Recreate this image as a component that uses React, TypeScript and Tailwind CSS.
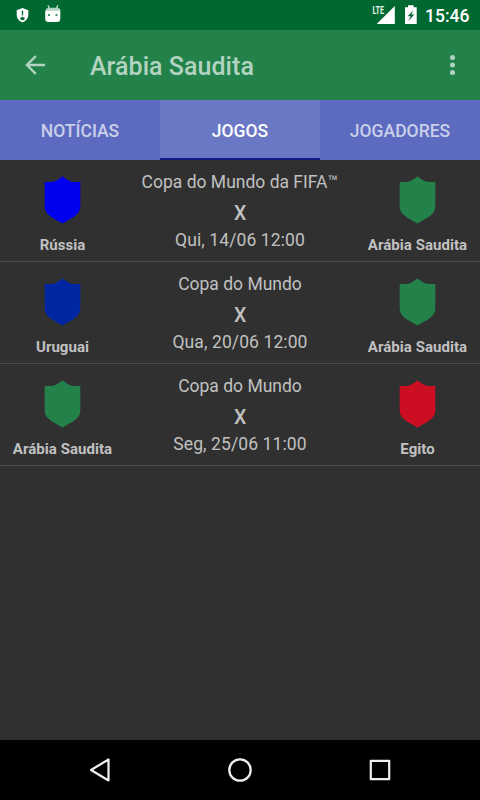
const matches = [
  { home: "Rússia", homeColor: "#0000ee", away: "Arábia Saudita", awayColor: "#22824a", cup: "Copa do Mundo da FIFA™", date: "Qui, 14/06 12:00" },
  { home: "Uruguai", homeColor: "#0026a3", away: "Arábia Saudita", awayColor: "#22824a", cup: "Copa do Mundo", date: "Qua, 20/06 12:00" },
  { home: "Arábia Saudita", homeColor: "#22824a", away: "Egito", awayColor: "#cb0e21", cup: "Copa do Mundo", date: "Seg, 25/06 11:00" },
];

function Shield({ color }: { color: string }) {
  return (
    <svg width="37" height="48" viewBox="0 0 37 48" fill={color}>
      <path d="M18.5 .2C14.4 3.6 11.5 5.9 7 5.9H.7V30.5C.7 38.5 7.5 41 18.5 47.6C29.5 41 36.3 38.5 36.3 30.5V5.9H30C25.5 5.9 22.6 3.6 18.5 .2Z" />
    </svg>
  );
}

function Team({ name, color }: { name: string; color: string }) {
  return (
    <div className="flex w-[125px] flex-col items-center pt-4">
      <Shield color={color} />
      <span className="mt-[11px] whitespace-nowrap text-[15px] leading-[20px] font-bold tracking-[0.05px]">{name}</span>
    </div>
  );
}

function StatusBar() {
  return (
    <div className="flex h-[30px] items-center bg-[#006830] text-white">
      <svg className="ml-4" width="13" height="30" viewBox="0 0 13 30">
        <path d="M6.5 8L12.3 10.2V14.8C12.3 18.4 9.8 21.3 6.5 22.4C3.2 21.3.7 18.4.7 14.8V10.2Z" fill="white" />
        <path d="M6.5 10.8V14.7M6.5 15.4V16.3" stroke="#006830" strokeWidth="1.4" />
        <ellipse cx="6.5" cy="18.6" rx="2.3" ry="1.7" fill="#006830" />
      </svg>
      <svg className="ml-4" width="16" height="30" viewBox="0 0 16 30">
        <path d="M3 5.2L4.5 9M12.8 5.2L11.3 9" stroke="#d5e8dc" strokeWidth="1.2" />
        <path d="M.5 11C.5 8.8 2 7.8 4.5 7.8H11.5C14 7.8 15.5 8.8 15.5 11Z" fill="#b3d2c1" />
        <path d="M.2 10.8H15.3V18.5Q15.3 22 12 22H3.5Q.2 22 .2 18.5Z" fill="white" />
        <path d="M3 14H5V16H3ZM10.5 14H12.5V16H10.5Z" fill="#43966a" />
      </svg>
      <div className="ml-auto flex h-full items-start">
        <svg width="24" height="30" viewBox="0 0 24 30">
          <text x="0.5" y="14" fontFamily="Roboto, sans-serif" fontSize="11" fontWeight="700" fill="#eaf4ee" textLength="11.5" lengthAdjust="spacingAndGlyphs">LTE</text>
          <path d="M4.7 24L22.8 6V24Z" fill="white" />
        </svg>
        <svg className="ml-[8px]" width="14" height="30" viewBox="0 0 14 30">
          <path d="M1 7.3H4V5.3H9.6V7.3H12.7V24H1Z" fill="white" />
          <path d="M9.3 10.3L3.7 16.2H6.7L4.2 21.2L10.3 14.4H7.4Z" fill="#006830" />
        </svg>
      </div>
      <span className="mr-[10px] ml-[7px] w-[45px] whitespace-nowrap pt-[2px] text-[17.5px] leading-[20px] font-medium">15:46</span>
    </div>
  );
}

export default function App() {
  return (
    <div className="flex h-[800px] w-[480px] flex-col overflow-hidden bg-[#303030] font-[Roboto,sans-serif]">
      <StatusBar />
      <header className="flex h-[70px] items-center bg-[#22824a] text-[#b2d3c0]">
        <svg className="ml-[25px]" width="21" height="20" viewBox="0 0 21 20" fill="none" stroke="currentColor" strokeWidth="2.3">
          <path d="M20 10H2M10.8 1.1L1.9 10L10.8 18.9" />
        </svg>
        <h1 className="mt-[3px] ml-11 text-[25px] leading-[30px] font-medium tracking-[0.04px]">Arábia Saudita</h1>
        <svg className="mr-6 ml-auto" width="6" height="22" viewBox="0 0 6 22" fill="currentColor">
          <circle cx="2.5" cy="3.5" r="2.5" />
          <circle cx="2.5" cy="11" r="2.5" />
          <circle cx="2.5" cy="18.5" r="2.5" />
        </svg>
      </header>
      <nav className="grid h-[60px] grid-cols-3 bg-[#5c6bc0] text-center text-[17.5px] leading-[62px] font-medium text-[#cacfea]">
        <span>NOTÍCIAS</span>
        <span className="h-[60px] border-b-2 border-[#101e82] bg-[#6977c4] text-white">JOGOS</span>
        <span>JOGADORES</span>
      </nav>
      <main className="flex-1 text-[#c1c1c1]">
        {matches.map((match) => (
          <section key={match.date} className="flex h-[102px] border-b border-[#4a4a4a]">
            <Team name={match.home} color={match.homeColor} />
            <div className="flex flex-1 flex-col items-center whitespace-nowrap pt-3 text-[17.5px] leading-[21px]">
              <span>{match.cup}</span>
              <span className="mt-[10px] text-[19.5px] leading-[22px] font-medium tracking-[-0.2px]">X</span>
              <span className="mt-[5px] tracking-[0.1px]">{match.date}</span>
            </div>
            <Team name={match.away} color={match.awayColor} />
          </section>
        ))}
      </main>
      <footer className="flex h-[60px] items-center bg-black pl-[88px]">
        <svg width="24" height="28" viewBox="0 0 24 28" fill="none" stroke="#eeeeee" strokeWidth="2.2" strokeLinejoin="round">
          <path d="M20.5 3.5V24.5L3 14Z" />
        </svg>
        <svg className="ml-[114px]" width="28" height="28" viewBox="0 0 28 28" fill="none" stroke="#eeeeee" strokeWidth="2.3">
          <circle cx="14" cy="14" r="10.7" />
        </svg>
        <svg className="ml-[112px]" width="28" height="28" viewBox="0 0 28 28" fill="none" stroke="#eeeeee" strokeWidth="2.2" strokeLinejoin="round">
          <path d="M4.8 4.8H23.2V23.2H4.8Z" />
        </svg>
      </footer>
    </div>
  );
}
